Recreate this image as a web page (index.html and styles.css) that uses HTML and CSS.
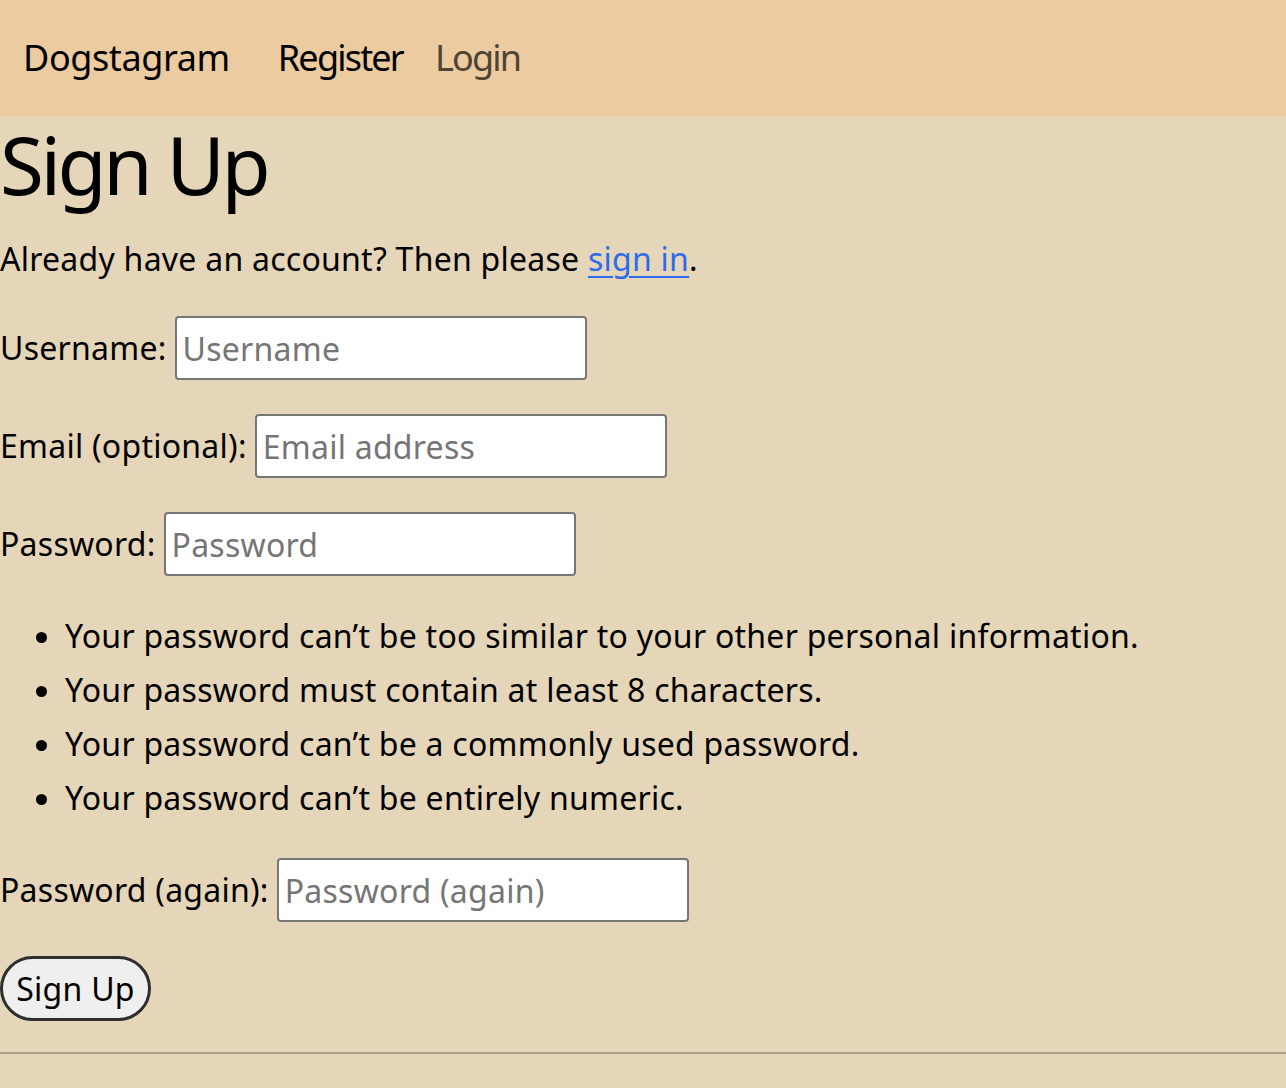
FILE: index.html
```html
<!DOCTYPE html>
<html lang="en">
<head>
<meta charset="utf-8">
<title>Sign Up - Dogstagram</title>
<link rel="stylesheet" href="styles.css">
</head>
<body>
<nav class="topnav">
  <a class="brand" href="#">Dogstagram</a>
  <a class="nav-link active" href="#">Register</a>
  <a class="nav-link muted" href="#">Login</a>
</nav>
<main class="content">
  <h1 class="title">Sign Up</h1>
  <p class="intro">Already have an account? Then please <a class="link" href="#">sign in</a>.</p>
  <form class="signup">
    <div class="row">
      <label class="label" for="u">Username:</label>
      <input class="field" id="u" type="text" placeholder="Username">
    </div>
    <div class="row">
      <label class="label" for="e">Email (optional):</label>
      <input class="field" id="e" type="email" placeholder="Email address">
    </div>
    <div class="row">
      <label class="label" for="p1">Password:</label>
      <input class="field" id="p1" type="password" placeholder="Password">
    </div>
    <ul class="rules">
      <li>Your password can’t be too similar to your other personal information.</li>
      <li>Your password must contain at least 8 characters.</li>
      <li>Your password can’t be a commonly used password.</li>
      <li>Your password can’t be entirely numeric.</li>
    </ul>
    <div class="row">
      <label class="label" for="p2">Password (again):</label>
      <input class="field" id="p2" type="password" placeholder="Password (again)">
    </div>
    <button class="submit" type="button">Sign Up</button>
  </form>
  <hr class="rule">
</main>
</body>
</html>
```
FILE: styles.css
```css
html, body {
  margin: 0;
  padding: 0;
}
body {
  background: #e6d6b9;
  color: #000;
  font-family: "Noto Sans", "Open Sans", sans-serif;
  font-size: 32px;
  letter-spacing: 0.25px;
  min-height: 1088px;
}
.topnav {
  display: flex;
  align-items: center;
  height: 116px;
  background: #ebcb9f;
  padding-left: 23px;
}
.topnav a {
  font-size: 36px;
  line-height: 40px;
  letter-spacing: -1.8px;
  text-decoration: none;
  color: #000;
}
.topnav .brand {
  letter-spacing: -0.4px;
  margin-right: 48px;
}
.nav-link.active {
  margin-right: 32px;
}
.nav-link.muted {
  color: #4f4535;
}
.content {
  padding: 0;
}
.title {
  font-size: 80px;
  font-weight: 400;
  line-height: 85px;
  margin: 5px 0 0;
  letter-spacing: -3.5px;
}
.intro {
  margin: 33px 0 0;
  line-height: 40px;
}
.link {
  color: #2c6cea;
  text-decoration: underline;
  text-decoration-thickness: 2px;
  text-underline-offset: 5px;
}
.signup {
  margin-top: 37px;
}
.row {
  display: flex;
  align-items: center;
  height: 64px;
  margin-bottom: 34px;
}
.label {
  line-height: 40px;
  margin-right: 8px;
}
.field {
  box-sizing: border-box;
  width: 412px;
  height: 64px;
  border: 2px solid #767676;
  border-radius: 4px;
  background: #fff;
  font-family: "Noto Sans", "Open Sans", sans-serif;
  font-size: 32px;
  letter-spacing: 0.25px;
  padding: 0 6px;
  color: #000;
}
.field::placeholder {
  color: #757575;
}
.rules {
  margin: -1px 0 33px;
  padding-left: 65px;
}
.rules li {
  line-height: 54px;
}
.submit {
  box-sizing: border-box;
  display: block;
  width: 151px;
  height: 65px;
  margin: 0;
  padding: 0 12px;
  border: 3px solid #2e2e2e;
  border-radius: 33px;
  background: #efefef;
  font-family: "Noto Sans", "Open Sans", sans-serif;
  font-size: 32px;
  letter-spacing: 0.25px;
  color: #000;
}
.rule {
  margin: 31px 0 0;
  border: 0;
  border-top: 2px solid #a89f8e;
  height: 0;
}
```
